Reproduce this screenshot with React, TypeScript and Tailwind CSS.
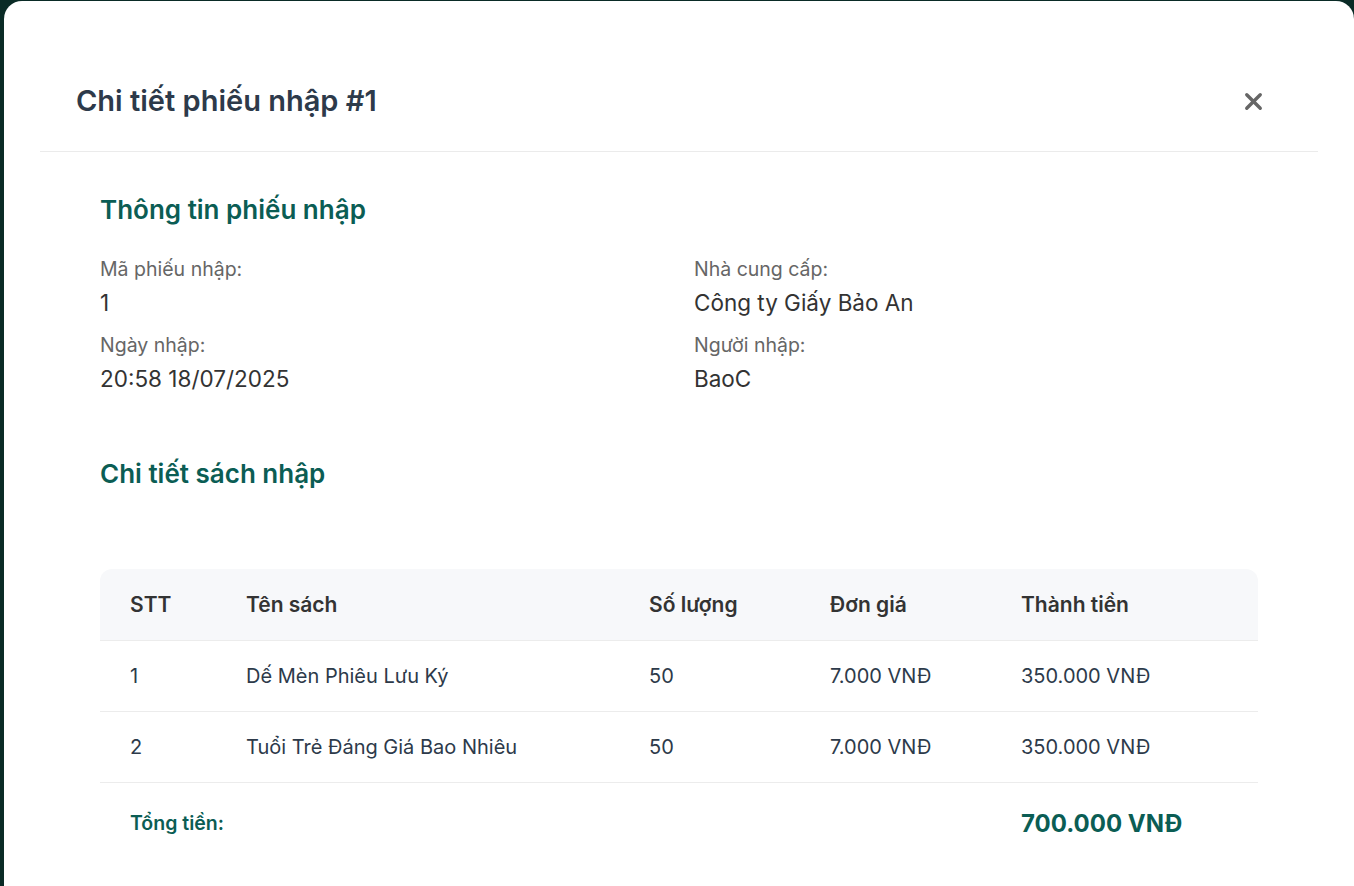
import { X } from 'lucide-react';

const rows = [
  { stt: 1, name: 'Dế Mèn Phiêu Lưu Ký', qty: 50, price: '7.000 VNĐ', total: '350.000 VNĐ' },
  { stt: 2, name: 'Tuổi Trẻ Đáng Giá Bao Nhiêu', qty: 50, price: '7.000 VNĐ', total: '350.000 VNĐ' },
];

function Field({ label, value }: { label: string; value: string }) {
  return (
    <div className="flex flex-col">
      <span className="text-[19.5px] leading-[26px] text-[#666666]">{label}</span>
      <span className="mt-[7px] text-[22.5px] leading-[28px] text-[#333333]">{value}</span>
    </div>
  );
}

export default function App() {
  return (
    <div
      className="w-[1354px] h-[886px] overflow-hidden bg-[#0a2b26] pt-[1px] pl-[4px]"
      style={{ fontFamily: 'Inter, "Noto Sans", sans-serif' }}
    >
      <div className="bg-white rounded-t-[18px] h-[900px] px-[36px]">
        <div className="flex items-center justify-between pt-[82px] pb-[32px] px-[36px] border-b border-[#ebebeb]">
          <h1 className="text-[29px] leading-[36px] font-semibold text-[#2d3a4a]">Chi tiết phiếu nhập #1</h1>
          <X className="w-[27px] h-[27px] text-[#666666] mr-[15px]" strokeWidth={3} />
        </div>

        <div className="px-[60px] pt-[42px]">
          <h2 className="text-[26px] leading-[32px] font-semibold text-[#0b5d54]">Thông tin phiếu nhập</h2>
          <div className="grid grid-cols-2 gap-x-[30px] gap-y-[15px] mt-[30px]">
            <Field label="Mã phiếu nhập:" value="1" />
            <Field label="Nhà cung cấp:" value="Công ty Giấy Bảo An" />
            <Field label="Ngày nhập:" value="20:58 18/07/2025" />
            <Field label="Người nhập:" value="BaoC" />
          </div>

          <h2 className="mt-[65px] text-[26px] leading-[32px] font-semibold text-[#0b5d54]">Chi tiết sách nhập</h2>

          <div className="mt-[79px]">
            <div className="flex items-center h-[72px] bg-[#f7f8fa] rounded-t-[12px] border-b border-[#ececec] text-[21px] font-semibold text-[#333333]">
              <div className="w-[146px] pl-[30px]">STT</div>
              <div className="w-[403px]">Tên sách</div>
              <div className="w-[181px]">Số lượng</div>
              <div className="w-[191px]">Đơn giá</div>
              <div className="flex-1">Thành tiền</div>
            </div>
            {rows.map((r) => (
              <div key={r.stt} className="flex items-center h-[71px] border-b border-[#ececec] text-[20px] text-[#2d3a4a]">
                <div className="w-[146px] pl-[30px]">{r.stt}</div>
                <div className="w-[403px]">{r.name}</div>
                <div className="w-[181px]">{r.qty}</div>
                <div className="w-[191px]">{r.price}</div>
                <div className="flex-1">{r.total}</div>
              </div>
            ))}
            <div className="flex items-center h-[82px] text-[#0b5d54]">
              <div className="w-[921px] pl-[30px] text-[19.5px] font-semibold">Tổng tiền:</div>
              <div className="flex-1 text-[24px] font-bold">700.000 VNĐ</div>
            </div>
          </div>
        </div>
      </div>
    </div>
  );
}
